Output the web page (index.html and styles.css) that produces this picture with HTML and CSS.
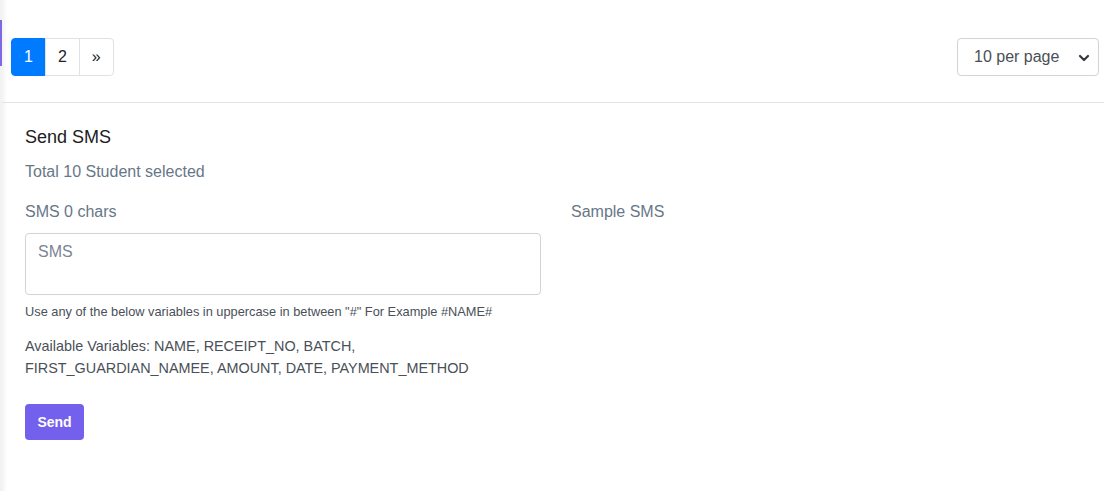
FILE: index.html
```html
<!DOCTYPE html>
<html>
<head>
<meta charset="utf-8">
<link rel="stylesheet" href="styles.css">
</head>
<body>
<div class="page">
  <div class="active-mark"></div>
  <div class="toolbar">
    <ul class="pagination">
      <li class="page-link active">1</li>
      <li class="page-link">2</li>
      <li class="page-link">»</li>
    </ul>
    <div class="select">
      <span>10 per page</span>
      <svg class="chev" width="12" height="12" viewBox="0 0 12 12"><path d="M2 4 L6 8 L10 4" fill="none" stroke="#343a40" stroke-width="2.2" stroke-linecap="round" stroke-linejoin="round"/></svg>
    </div>
  </div>
  <div class="divider"></div>
  <div class="sms">
    <h5 class="title">Send SMS</h5>
    <p class="total">Total 10 Student selected</p>
    <div class="grid">
      <div class="col">
        <label class="label">SMS 0 chars</label>
        <textarea class="textarea" placeholder="SMS"></textarea>
        <p class="hint">Use any of the below variables in uppercase in between "#" For Example #NAME#</p>
        <p class="vars">Available Variables: NAME, RECEIPT_NO, BATCH,<br>FIRST_GUARDIAN_NAMEE, AMOUNT, DATE, PAYMENT_METHOD</p>
        <button class="send">Send</button>
      </div>
      <div class="col">
        <div class="label">Sample SMS</div>
      </div>
    </div>
  </div>
</div>
</body>
</html>
```
FILE: styles.css
```css
* { box-sizing: border-box; }
html, body { margin: 0; padding: 0; }
body {
  font-family: "Liberation Sans", Arial, sans-serif;
  background: #fff;
  width: 1104px;
  height: 491px;
  overflow: hidden;
}
.page {
  position: relative;
  height: 491px;
  background: linear-gradient(to right, #f1f1f3 0, #f5f5f6 3px, #fafafa 5px, #fff 7px);
}
.active-mark {
  position: absolute;
  left: 0;
  top: 20px;
  width: 2px;
  height: 46px;
  background: #7f67e6;
}
.toolbar {
  display: flex;
  justify-content: space-between;
  align-items: center;
  padding: 38px 5px 0 11px;
}
.pagination {
  display: flex;
  list-style: none;
  margin: 0;
  padding: 0;
}
.page-link {
  font-size: 16px;
  line-height: 20px;
  padding: 8px 12px;
  color: #212529;
  background: #fff;
  border: 1px solid #dee2e6;
  margin-left: -1px;
}
.page-link:first-child { margin-left: 0; border-radius: 4px 0 0 4px; }
.page-link:last-child { border-radius: 0 4px 4px 0; }
.page-link.active {
  background: #007bff;
  border-color: #007bff;
  color: #fff;
}
.select {
  width: 142px;
  height: 38px;
  border: 1px solid #ced4da;
  border-radius: 4px;
  display: flex;
  align-items: center;
  justify-content: space-between;
  padding: 0 8px 0 16px;
  font-size: 16px;
  color: #495057;
}
.chev { margin-top: 1px; }
.divider {
  margin-top: 26px;
  height: 1px;
  background: #e3e3e3;
  margin-left: 2px;
}
.sms {
  padding: 23px 0 0 25px;
}
.title {
  margin: 0;
  font-size: 18px;
  font-weight: normal;
  line-height: 22px;
  color: #1e2022;
}
.total {
  margin: 14px 0 0;
  font-size: 16px;
  line-height: 20px;
  color: #677788;
}
.grid {
  display: grid;
  grid-template-columns: 516px 1fr;
  column-gap: 30px;
  margin-top: 20px;
}
.label {
  display: block;
  font-size: 16px;
  line-height: 20px;
  color: #677788;
}
.textarea {
  display: block;
  margin-top: 11px;
  width: 516px;
  height: 62px;
  border: 1px solid #ced4da;
  border-radius: 4px;
  padding: 8px 12px;
  font-family: "Liberation Sans", Arial, sans-serif;
  font-size: 16px;
  line-height: 20px;
  resize: none;
  outline: none;
}
.textarea::placeholder { color: #7a8594; }
.hint {
  margin: 9px 0 0;
  font-size: 12.8px;
  line-height: 16px;
  color: #495057;
}
.vars {
  margin: 15px 0 0;
  font-size: 14.4px;
  line-height: 22px;
  color: #495057;
}
.send {
  margin-top: 25px;
  width: 59px;
  height: 36px;
  border: none;
  border-radius: 4px;
  background: #7360ec;
  color: #fff;
  font-family: "Liberation Sans", Arial, sans-serif;
  font-weight: bold;
  font-size: 14px;
  padding: 0;
}
```
